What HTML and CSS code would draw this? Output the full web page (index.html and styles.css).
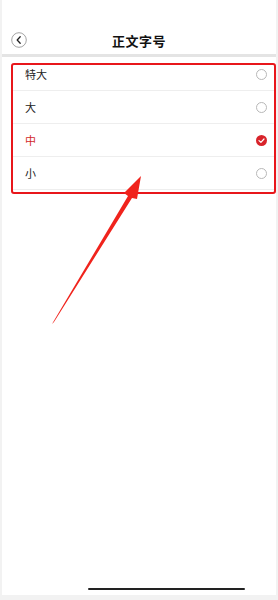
FILE: index.html
```
<!DOCTYPE html>
<html lang="zh-CN">
<head>
    <meta charset="UTF-8">
    <meta name="viewport" content="width=device-width, initial-scale=1.0">
    <title>正文字号</title>
    <link rel="stylesheet" href="styles.css">
</head>
<body>
    <div class="screen">
        <div class="nav-bar">
            <span class="back-btn">
                <svg width="16" height="16" viewBox="0 0 16 16">
                    <circle cx="8" cy="8" r="7.3" fill="none" stroke="#9a9a9a" stroke-width="0.9"/>
                    <path d="M9.2 4.8 L6.2 8 L9.2 11.2" fill="none" stroke="#222" stroke-width="1.3" stroke-linecap="round" stroke-linejoin="round"/>
                </svg>
            </span>
            <h1 class="nav-title">正文字号</h1>
        </div>
        <div class="nav-divider"></div>

        <div class="size-list">
            <div class="size-item">
                <span class="size-label">特大</span>
                <span class="radio"></span>
            </div>
            <div class="size-item">
                <span class="size-label">大</span>
                <span class="radio"></span>
            </div>
            <div class="size-item active">
                <span class="size-label">中</span>
                <span class="radio checked">
                    <svg width="11" height="11" viewBox="0 0 11 11">
                        <circle cx="5.5" cy="5.5" r="5.5" fill="#d8232a"/>
                        <path d="M3 5.6 L4.9 7.3 L8 4" fill="none" stroke="#fff" stroke-width="1.2" stroke-linecap="round" stroke-linejoin="round"/>
                    </svg>
                </span>
            </div>
            <div class="size-item">
                <span class="size-label">小</span>
                <span class="radio"></span>
            </div>
            <div class="highlight-box"></div>
        </div>

        <!-- 標註箭頭 -->
        <svg class="pointer-arrow" width="278" height="340" viewBox="0 0 278 340">
            <polygon points="50,324 126,196 122,193 139,176 135,199 130,198 52,322" fill="#f0231c"/>
        </svg>

        <div class="home-indicator"></div>
    </div>
</body>
</html>
```

FILE: styles.css
```
body {
    margin: 0;
    padding: 0;
    background: #f2f2f2;
    font-family: "Noto Sans CJK SC", "Noto Sans", sans-serif;
}

.screen {
    position: relative;
    width: 274px;
    height: 595px;
    margin: 0 2px;
    background: #fff;
    overflow: hidden;
}

.nav-bar {
    position: relative;
    display: flex;
    align-items: center;
    justify-content: center;
    height: 28px;
    margin-top: 26px;
}

.back-btn {
    position: absolute;
    left: 9px;
    top: 6px;
    width: 16px;
    height: 16px;
    display: flex;
}

.nav-title {
    margin: 0;
    font-size: 13px;
    font-weight: 700;
    color: #111;
    letter-spacing: 0.5px;
}

.nav-divider {
    height: 3px;
    background: #e4e4e4;
}

.size-list {
    position: relative;
    margin: 0 2px 0 11px;
}

.size-item {
    display: flex;
    align-items: center;
    justify-content: space-between;
    height: 32px;
    padding: 0 7px 0 12px;
    border-bottom: 1px solid #eeeeee;
}

.size-item:first-child {
    margin-top: 1px;
}

.size-item:last-of-type {
    border-bottom: none;
}

.size-label {
    font-size: 11px;
    color: #222;
}

.size-item.active .size-label {
    color: #d22a2a;
}

.radio {
    width: 9px;
    height: 9px;
    border: 1px solid #b8b8b8;
    border-radius: 50%;
}

.radio.checked {
    width: 11px;
    height: 11px;
    border: none;
    display: flex;
}

.highlight-box {
    position: absolute;
    top: 5px;
    left: -2px;
    right: -2px;
    bottom: -4px;
    border: 2px solid #e8161b;
    border-radius: 3px;
}

.pointer-arrow {
    position: absolute;
    left: 0;
    top: 0;
}

.home-indicator {
    position: absolute;
    left: 86px;
    bottom: 5px;
    width: 157px;
    height: 2px;
    border-radius: 1px;
    background: #222;
}
```
